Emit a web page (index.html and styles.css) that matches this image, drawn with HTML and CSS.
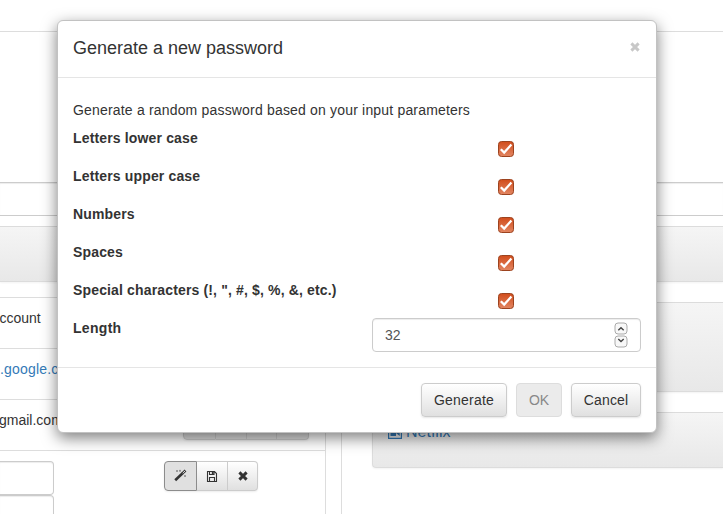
FILE: index.html
```
<!DOCTYPE html>
<html lang="en">
<head>
<meta charset="utf-8">
<title>Generate a new password</title>
<link rel="stylesheet" href="styles.css">
</head>
<body>
<svg class="defs" width="0" height="0" aria-hidden="true">
  <symbol id="check" viewBox="0 0 16 16">
    <linearGradient id="orange" x1="0" y1="0" x2="0" y2="1"><stop offset="0" stop-color="#d14c1b"/><stop offset="1" stop-color="#e28662"/></linearGradient>
    <rect x=".5" y=".5" width="15" height="15" rx="3" fill="url(#orange)" stroke="#9c431f"/>
    <path d="M2.8 8.2 6.2 11.6 13.4 3.6" fill="none" stroke="#fff" stroke-width="2.3"/>
  </symbol>
  <symbol id="cross" viewBox="0 0 10 10"><path d="M1.4 1.4 8.6 8.6M8.6 1.4 1.4 8.6" stroke="currentColor" stroke-width="2.9"/></symbol>
</svg>
<div class="page">
  <div class="topbar"></div>
  <div class="search"></div>
  <div class="columns">
    <section class="panel entry">
      <div class="band"></div>
      <div class="row first"><span class="cut">ccount</span></div>
      <div class="row"><a class="spaced">.google.com</a></div>
      <div class="row"><span class="mail">gmail.com</span>
        <div class="group behind"><i class="w33"></i><i class="w31"></i><i class="w30"></i><i class="w32"></i></div>
      </div>
      <div class="edit">
        <div class="fields"><div class="field"></div><div class="field"></div></div>
        <div class="group">
          <button class="w33 active" aria-label="Generate password"><svg width="13" height="13" viewBox="0 0 13 13"><path d="M1.2 11.2 8.6 4.2" stroke="#333" stroke-width="2.6"/><path d="M8.4 4.4 11.5 1.5" stroke="#333" stroke-width="2.6"/><path d="M8.8 4.1 11.2 1.8" stroke="#ddd" stroke-width="1"/><path d="M3 1v2M2 2h2M6 .8v2M5 1.8h2M11 6v2M10 7h2" stroke="#777" stroke-width=".8"/></svg></button>
          <button class="w31" aria-label="Save"><svg width="12" height="12" viewBox="0 0 12 12"><path d="M1.5 1.5h7l2 2v8h-9zM3.5 1.5v3h4.5v-3M3.5 11.5v-4h5v4" fill="none" stroke="#333" stroke-width="1.1"/><path d="M5.8 1h1.8v3H5.8z" fill="#333"/></svg></button>
          <button class="w30" aria-label="Close"><svg width="10" height="10"><use href="#cross"/></svg></button>
        </div>
      </div>
    </section>
    <section class="panel list">
      <div class="band"></div>
      <div class="well tall"></div>
      <div class="well"><a><svg width="14" height="14" viewBox="0 0 14 14"><path d="M.6.6h12.8v12.8H.6z" fill="none" stroke="currentColor" stroke-width="1.2"/><path d="M2.5 3h5.5v8H2.5zM8 8l3.7-5v8z" fill="currentColor"/></svg>Netflix</a></div>
    </section>
  </div>
</div>
<div class="modal" role="dialog">
  <header><h4>Generate a new password</h4><svg class="close" width="10" height="10"><use href="#cross"/></svg></header>
  <div class="body">
    <p>Generate a random password based on your input parameters</p>
    <div class="option"><b>Letters lower case</b><svg width="16" height="16"><use href="#check"/></svg></div>
    <div class="option"><b>Letters upper case</b><svg width="16" height="16"><use href="#check"/></svg></div>
    <div class="option"><b>Numbers</b><svg width="16" height="16"><use href="#check"/></svg></div>
    <div class="option"><b>Spaces</b><svg width="16" height="16"><use href="#check"/></svg></div>
    <div class="option"><b>Special characters (!, ", #, $, %, &amp;, etc.)</b><svg width="16" height="16"><use href="#check"/></svg></div>
    <div class="option length"><b>Length</b>
      <div class="number"><span>32</span>
        <svg width="14" height="26" viewBox="0 0 14 26"><rect x="1" y="1" width="12" height="11" rx="3" fill="#f8f8f8" stroke="#aaa"/><rect x="1" y="14" width="12" height="11" rx="3" fill="#f8f8f8" stroke="#aaa"/><path d="M4.3 8.3 7 5.8l2.7 2.5M4.3 17l2.7 2.5L9.7 17" fill="none" stroke="#444" stroke-width="1.4"/></svg>
      </div>
    </div>
  </div>
  <footer><button class="btn generate">Generate</button><button class="btn ok" disabled>OK</button><button class="btn cancel">Cancel</button></footer>
</div>
</body>
</html>
```
FILE: styles.css
```
* { box-sizing: border-box; }
body {
  margin: 0;
  height: 514px;
  overflow: hidden;
  background: #fff;
  color: #333;
  font: 14px/20px "Liberation Sans", Arial, sans-serif;
}
.defs { position: absolute; }
svg { display: block; flex: none; }
a { color: #337ab7; }
button { font: inherit; color: #333; padding: 0; margin: 0; }

.page { height: 514px; overflow: hidden; }
.topbar { height: 32px; border-bottom: 1px solid #ddd; }
.search {
  height: 34px;
  margin: 150px 0 10px;
  border: solid #ccc;
  border-width: 1px 0;
  box-shadow: inset 0 1px 1px rgba(0, 0, 0, .075);
}
.columns { display: flex; gap: 15px; height: 288px; }
.panel { border: 0 solid #ddd; }
.entry { width: 326px; border-right-width: 1px; }
.list { flex: 1; border-left-width: 1px; }
.band, .well {
  border: solid #dcdcdc;
  border-width: 1px 0;
  background: linear-gradient(#f5f5f5, #e8e8e8);
  box-shadow: 0 1px 2px rgba(0, 0, 0, .05);
}
.band { height: 56px; }
.row {
  display: flex;
  justify-content: space-between;
  height: 51px;
  padding-top: 10px;
  border-top: 1px solid #ddd;
}
.first { margin-top: 15px; }
.cut { margin-left: -.5px; }
.mail { margin-left: -1px; }
.spaced { letter-spacing: .18px; }

.group { display: flex; height: 30px; border-radius: 4px; box-shadow: 0 1px 2px rgba(0, 0, 0, .075); }
.group > * {
  display: flex;
  align-items: center;
  justify-content: center;
  border: 1px solid #ccc;
  border-left-width: 0;
  background: linear-gradient(#fff, #e0e0e0);
}
.group > :first-child { border-left-width: 1px; border-radius: 4px 0 0 4px; }
.group > :last-child { border-radius: 0 4px 4px 0; }
.group .active { border: 1px solid #8c8c8c; background: #e0e0e0; }
.group .active svg { margin-bottom: 2px; }
.behind { margin-right: 16px; }
.behind > * { background: #e0e0e0; }
.w30 { width: 30px; }
.w31 { width: 31px; }
.w32 { width: 32px; }
.w33 { width: 33px; }

.edit { display: flex; justify-content: space-between; padding: 10px 67px 0 0; border-top: 1px solid #ddd; }
.fields { width: 54px; }
.field {
  height: 34px;
  border: 1px solid #ccc;
  border-left: 0;
  border-radius: 0 4px 4px 0;
  box-shadow: inset 0 1px 1px rgba(0, 0, 0, .075);
}

.well { height: 56px; margin: 20px 0 0 30px; border-left-width: 1px; border-radius: 4px 0 0 4px; }
.well a { display: flex; gap: 4px; padding: 9px 0 0 15px; font-size: 16px; }
.well a svg { margin-top: 3px; }
.well.tall { height: 90px; }

/* Dialog floating above the page */
.modal {
  position: absolute;
  left: 57px;
  top: 20px;
  width: 600px;
  height: 413px;
  border: 1px solid #c2c2c2;
  border-radius: 6px;
  background: #fff;
  box-shadow: 0 5px 15px rgba(0, 0, 0, .5);
}
header {
  display: flex;
  justify-content: space-between;
  height: 57px;
  padding: 15px 16px 0 15px;
  border-bottom: 1px solid #e5e5e5;
}
h4 { margin: 0; font-size: 18px; font-weight: 500; line-height: 25px; }
.close { margin-top: 6px; color: #c8c8c8; }
.body { padding: 22px 15px 15px; }
p { margin: 0 0 8px; letter-spacing: .18px; }
.option { display: flex; height: 38px; }
.option b { width: 425px; letter-spacing: .15px; }
.option > svg { margin-top: 13px; }
.length { height: 34px; }
.length b { width: 299px; letter-spacing: .3px; }
.number {
  display: flex;
  flex: 1;
  justify-content: space-between;
  align-items: center;
  height: 34px;
  padding: 0 12px;
  border: 1px solid #ccc;
  border-radius: 4px;
  color: #555;
  box-shadow: inset 0 1px 1px rgba(0, 0, 0, .075);
}
footer { display: flex; justify-content: flex-end; gap: 9px; padding: 15px; border-top: 1px solid #e5e5e5; }
.btn {
  height: 34px;
  border: 1px solid #ccc;
  border-radius: 4px;
  background: linear-gradient(#fff, #e0e0e0);
  box-shadow: 0 1px 2px rgba(0, 0, 0, .1);
}
.generate { width: 86px; letter-spacing: .2px; }
.ok { width: 46px; border-color: #ddd; background: #ebebeb; color: #888; box-shadow: none; }
.cancel { width: 70px; letter-spacing: .15px; }
```
